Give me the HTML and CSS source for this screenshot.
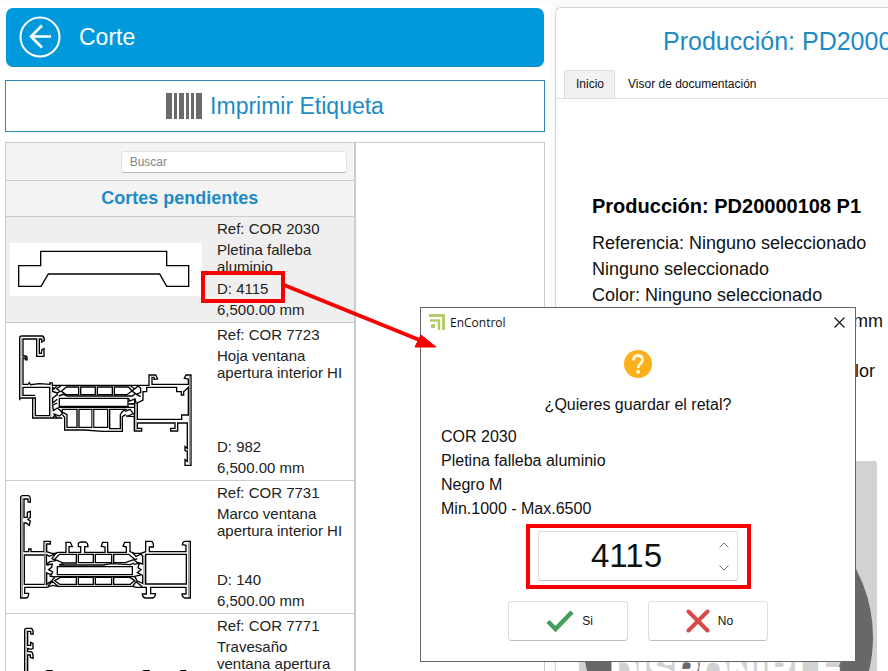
FILE: index.html
```html
<!DOCTYPE html>
<html lang="es">
<head>
<meta charset="utf-8">
<title>EnControl</title>
<link rel="stylesheet" href="styles.css">
</head>
<body>
<div class="app">
  <main class="left">
    <header class="topbar">
      <button class="back" aria-label="Volver">
        <svg width="42" height="42" viewBox="0 0 42 42" fill="none" stroke="#fff"><circle cx="21" cy="21" r="19.5" stroke-width="2"/><path d="M32 20.500H12M23 9.500L12 20.500L23 31.500" stroke-width="2.600"/></svg>
      </button>
      <h1>Corte</h1>
    </header>
    <button class="print">
      <svg width="36" height="26" viewBox="0 0 36 26" fill="#6b6b6b"><path d="M0 0h6v26H0zM8 0h3v26H8zM13 0h5v26h-5zM20 0h3v26h-3zM25 0h3v26h-3zM30 0h6v26h-6z"/></svg>
      <span>Imprimir Etiqueta</span>
    </button>
    <div class="board">
      <section class="list">
        <div class="search"><input type="text" placeholder="Buscar" aria-label="Buscar"></div>
        <h2>Cortes pendientes</h2>
        <article class="item selected">
          <svg class="flat" viewBox="30 84 576 159"><path d="M56 152H122V109H500V152H566V214H500L479 177H145L123 214H56Z"/></svg>
          <div class="info">
            <p>Ref: COR 2030</p>
            <p class="desc">Pletina falleba aluminio</p>
            <p class="marked">D: 4115</p>
            <p>6,500.00 mm</p>
          </div>
        </article>
        <article class="item">
          <svg class="tall" viewBox="30 6 576 450">
            <path d="M65 222H59V42Q59 36 65 36H127Q133 38 133 49L125 54V45H118V88H124L126 77L132 74V97H110V45H69V96H77Q83 98 81 108L76 107V102H69V181H84L88 176L92 182L118 179L150 181V176L157 177V184H447V153H467L473 165L462 166V160H456V181H565V165L553 163L558 153H573V424H555V407L562 412V381L555 380V368L562 373V297H533V321H512V313H525V297H412V313H425V321H403V270"/>
            <path d="M59 229V222H106V275H149V190H69V214H106M65 222H98V282H158L164 274L172 282"/>
            <path d="M172 184L162 195L158 190V202L172 207L180 202L170 194L184 184M158 203L172 207V212L158 222V237L172 226M172 237L158 243L160 260L172 252L182 260L187 269L178 276L160 269M158 282H187"/>
            <path d="M199 189H236V212H198L184 202ZM242 189H286V212H242ZM292 189H337V212H292ZM343 189H386L396 201L381 212H343Z"/>
            <path d="M176 216L190 211L202 216H397L407 208M178 223H384V247H178ZM175 250H405"/>
            <path d="M187 256H231V310H201V272L187 264ZM237 256H276V310H237ZM281 256H323V310H281ZM329 256H377L366 264L361 272V314H329ZM187 272L194 280V318H255L307 322H367V278L377 272"/>
            <path d="M390 184L404 195L414 186L422 193V206L409 211L397 202L403 193M409 211L422 218M387 223V232L405 225L409 238L386 240M375 262L390 256L400 269L384 276M404 270V225M378 276L406 278"/>
            <path d="M440 190H530V203H544V213H551V203L565 190V273H545V286H412V237L429 228V203H440Z"/>
            <path class="soft" d="M63 42V222M152 188V278M569 156V420M408 236V318M278 258V312"/>
          </svg>
          <div class="info">
            <p>Ref: COR 7723</p>
            <p class="desc">Hoja ventana apertura interior HI</p>
            <p>D: 982</p>
            <p>6,500.00 mm</p>
          </div>
        </article>
        <article class="item">
          <svg class="mid" viewBox="30 12 576 375">
            <path d="M62 353V53Q62 47 68 47H86Q92 49 91 67L84 66V57H72V112H82V97L91 94V112L84 119L91 123L88 136L79 129H72V215H86V207H93V215H132V184H151V192H140V215L155 220H167L174 217H198V187H211L217 200H207V217H242V200H235V190Q238 186 244 186H257Q264 190 264 200H254V217H315V201L304 199L308 187H323V217H379V201L369 198L374 187H390V215L403 220H422L437 215V184H455Q462 190 460 201H448V215H558V196L547 194Q547 187 554 184H571V354H554Q546 350 546 342H558V322H452V341H466Q466 352 457 354H435Q427 352 427 342H439V322H409L397 319H174L158 316L140 322H74V340H86Q86 352 80 354H62Z"/>
            <path d="M73 225H134V313H73ZM437 223H559V312H437Z"/>
            <path d="M178 223H229V249H190L164 238ZM235 223H280V248H235ZM286 223H335V248H286ZM341 223H386L404 238L376 248H341Z"/>
            <path d="M190 251L177 255H310L332 251L390 254L402 249M172 260H397V284H172ZM166 290H405"/>
            <path d="M181 292H229V313H179L164 302ZM235 292H280V313H235ZM286 292H335V313H286ZM341 292H390L404 302L391 313H341Z"/>
            <path d="M139 224L148 229L167 220L156 236L166 242L150 245L140 253ZM140 255L157 252L155 262L146 269L158 276L154 284L140 279V313L155 302L165 291L148 288M144 318L157 304L174 319"/>
            <path d="M397 217L408 229L424 222L428 230V252L411 247L403 240L412 236M401 253L418 250L414 263L423 269L412 278L424 284L404 289L412 303L428 310V285M399 318L408 305L427 320"/>
            <path class="soft" d="M67 53V350M135 188V315M566 188V350M432 225V315"/>
          </svg>
          <div class="info">
            <p>Ref: COR 7731</p>
            <p class="desc">Marco ventana apertura interior HI</p>
            <p>D: 140</p>
            <p>6,500.00 mm</p>
          </div>
        </article>
        <article class="item">
          <svg class="mid" viewBox="30 411 576 375">
            <path d="M74 700V451Q74 445 80 445H94Q101 448 99 463L92 462V454H83V496H92V487L99 490V505L92 508L83 505V515H93Q101 518 99 535L91 532V525H83V700M136 600V576Q138 572 143 572H158M427 580Q427 572 433 572H447V600M537 580Q540 572 545 572H557V600"/>
            <path class="soft" d="M78 450V700"/>
          </svg>
          <div class="info">
            <p>Ref: COR 7771</p>
            <p class="desc">Travesaño<br>ventana apertura</p>
          </div>
        </article>
      </section>
    </div>
  </main>

  <section class="right">
    <h2 class="order">Producción: PD20000108 P1</h2>
    <nav class="tabs">
      <button class="tab active">Inicio</button>
      <button class="tab">Visor de documentación</button>
    </nav>
    <div class="detail">
      <h3>Producción: PD20000108 P1</h3>
      <p>Referencia: Ninguno seleccionado</p>
      <p>Ninguno seleccionado</p>
      <p>Color: Ninguno seleccionado</p>
      <p class="measure">mm</p>
      <p class="kind">lor</p>
    </div>
    <svg class="photo" width="298" height="298" viewBox="0 0 298 298" role="img" aria-label="Disponible">
      <rect width="298" height="298" rx="3" fill="#d2d2d2"/>
      <circle cx="149" cy="176" r="130" fill="none" stroke="#686868" stroke-width="30"/>
      <path d="M82 230L112 194L148 230Z" fill="#686868"/>
      <text x="147" y="223" text-anchor="middle">DISPONIBLE</text>
    </svg>
  </section>
</div>

<div class="dialog" role="dialog" aria-labelledby="dialog-title">
  <div class="titlebar">
    <svg width="16" height="16" viewBox="0 0 16 16" fill="none" stroke="#b5cb68"><path d="M0 1.500H14.500V16" stroke-width="3"/><path d="M1 6.500H10V16" stroke-width="2.500"/><path d="M2 12H6" stroke-width="4"/></svg>
    <span id="dialog-title">EnControl</span>
    <button class="close" aria-label="Cerrar"><svg width="11" height="11" viewBox="0 0 11 11" stroke="#111" stroke-width="1.100"><path d="M.5.5l10 10M10.500.5l-10 10"/></svg></button>
  </div>
  <div class="content">
    <svg class="ask" width="28" height="28" viewBox="0 0 28 28"><circle cx="14" cy="14" r="14" fill="#fbb01c"/><path d="M9.500 10.500Q9.500 5.500 14 5.500T18.500 10Q18.500 12 16.500 13.500T14.200 18" fill="none" stroke="#fffbe0" stroke-width="2.800"/><circle cx="14.200" cy="21.800" r="1.900" fill="#fffbe0"/></svg>
    <p class="question">¿Quieres guardar el retal?</p>
    <div class="facts">
      <p>COR 2030</p>
      <p>Pletina falleba aluminio</p>
      <p>Negro M</p>
      <p>Min.1000 - Max.6500</p>
    </div>
    <div class="highlight">
      <div class="spin">
        <input type="number" value="4115" min="1000" max="6500" aria-label="Medida del retal">
        <div class="steps">
          <button aria-label="Aumentar"><svg width="10" height="6" viewBox="0 0 10 6"><path d="M.5 5.500L5 1L9.500 5.500"/></svg></button>
          <button aria-label="Disminuir"><svg width="10" height="6" viewBox="0 0 10 6"><path d="M.5.5L5 5L9.500.5"/></svg></button>
        </div>
      </div>
    </div>
    <div class="actions">
      <button><svg width="28" height="24" viewBox="0 0 28 24" fill="none" stroke="#449d5c" stroke-width="4.500"><path d="M2 12.500L9.500 20L26 3"/></svg>Si</button>
      <button><svg width="24" height="24" viewBox="0 0 24 24" fill="none" stroke="#d9484a" stroke-width="4" stroke-linecap="round"><path d="M2.500 2.500l19 19M21.500 2.500l-19 19"/></svg>No</button>
    </div>
  </div>
</div>

<svg class="arrow" width="156" height="72" viewBox="0 0 156 72" aria-hidden="true"><path d="M2 4L140 60" stroke="#f80000" stroke-width="4"/><path d="M139 54L154 66L133 66Z" fill="#f80000" stroke="#f80000"/></svg>
</body>
</html>
```
FILE: styles.css
```css
*,
*::before,
*::after {
  box-sizing: border-box;
}

body {
  margin: 0;
  font-family: "Liberation Sans", Arial, sans-serif;
  color: #222;
  background: #fafafa;
  overflow: hidden;
}

h1, h2, h3, p {
  margin: 0;
  font-weight: normal;
}

button {
  font: inherit;
  color: inherit;
  padding: 0;
  border: 0;
  background: none;
}

svg {
  display: block;
  flex: none;
}

.app {
  display: grid;
  grid-template-columns: 5fr 3fr;
  height: 100vh;
}

.left {
  display: flex;
  flex-direction: column;
  min-height: 0;
  margin-top: 3px;
  margin-right: 4px;
  padding: 5px 6px 0 5px;
  background: #fff;
}

.topbar {
  display: flex;
  align-items: center;
  gap: 18px;
  flex: none;
  height: 59px;
  margin: 0 1px 13px;
  padding-left: 13px;
  border-radius: 7px;
  background: #0099dc;
  border-bottom: 1px solid #1687c0;
  color: #fff;
}

.topbar h1 {
  font-size: 23px;
  line-height: 28px;
}

.print {
  display: flex;
  align-items: center;
  justify-content: center;
  gap: 8px;
  flex: none;
  height: 52px;
  margin-bottom: 10px;
  border: 1px solid #2a86b4;
  background: #fff;
  color: #1d8bc4;
  font-size: 23px;
}

.board {
  flex: 1;
  min-height: 0;
  border: 1px solid #ccc;
  border-bottom: 0;
  overflow: hidden;
}

.list {
  width: 65%;
  border-right: 2px solid #ccc;
}

.search {
  display: flex;
  justify-content: flex-end;
  padding: 8px 7px 7px;
  background: #f3f3f3;
  border-bottom: 1px solid #ccc;
}

.search input {
  width: 226px;
  height: 22px;
  padding: 0 8px;
  border: 1px solid #e4e4e4;
  border-bottom-color: #bbb;
  border-radius: 3px;
  background: #fff;
  font: 12px "Liberation Sans", Arial, sans-serif;
}

.search input::placeholder {
  color: #858585;
}

.list h2 {
  padding: 7px 0;
  border-bottom: 1px solid #ccc;
  background: #f3f3f3;
  color: #1d8bc4;
  font-size: 18px;
  line-height: 21px;
  font-weight: bold;
  text-align: center;
}

.item {
  display: flex;
  gap: 15px;
  padding: 3px 4px 4px;
  border-bottom: 1px solid #ccc;
}

.item.selected {
  background: #efefef;
}

.item > svg {
  width: 192px;
  align-self: center;
  background: #fff;
  fill: none;
  stroke: #000;
  stroke-width: 4;
}

.item .soft {
  stroke: #999;
}

.flat {
  height: 53px;
}

.tall {
  height: 150px;
}

.mid {
  height: 125px;
}

.info {
  display: flex;
  flex-direction: column;
  gap: 4px;
  flex: 1;
  font-size: 15px;
  line-height: 17px;
}

.desc {
  flex: 1;
  padding-bottom: 1px;
}

.marked {
  position: relative;
}

.marked::after {
  content: "";
  position: absolute;
  left: -16px;
  top: -9px;
  width: 84px;
  height: 32px;
  border: 4px solid #f80000;
}

.right {
  min-width: 0;
  margin-top: 7px;
  border: 1px solid #d4d4d4;
  border-width: 1px 0 0 1px;
  border-radius: 6px 0 0 0;
  background: #fff;
  overflow: hidden;
}

.order {
  padding: 19px 0 14px 107px;
  color: #1d8bc4;
  font-size: 25px;
  line-height: 29px;
  white-space: nowrap;
}

.tabs {
  display: flex;
  padding-left: 8px;
  border-bottom: 1px solid #ddd;
}

.tab {
  height: 28px;
  padding: 0 12px 2px;
  border: 1px solid transparent;
  border-bottom: 0;
  color: #111;
  font-size: 12px;
}

.tab.active {
  padding: 0 10px 2px 11px;
  border-color: #ddd;
  border-radius: 3px 3px 0 0;
  background: #f1f1f1;
}

.detail {
  width: 327px;
  padding: 94px 0 0 36px;
  color: #111;
  font-size: 18px;
  line-height: 26px;
  white-space: nowrap;
}

.detail h3 {
  margin-bottom: 11px;
  color: #000;
  font-size: 20px;
  font-weight: bold;
}

.measure {
  text-align: right;
}

.kind {
  padding: 24px 8px 0 0;
  text-align: right;
}

.photo {
  margin: 77px 0 0 23px;
}

.photo text {
  fill: #fff;
  stroke: #fff;
  stroke-width: 2;
  font: bold 38px "Liberation Sans", Arial, sans-serif;
}

.dialog {
  position: absolute;
  left: 420px;
  top: 307px;
  width: 436px;
  padding-bottom: 20px;
  border: 1px solid #666;
  background: #fff;
  color: #111;
}

.titlebar {
  display: flex;
  align-items: center;
  gap: 5px;
  height: 28px;
  padding: 0 10px 0 8px;
  font: 12px "Open Sans", "Noto Sans", sans-serif;
}

.close {
  margin-left: auto;
}

.content {
  display: flex;
  flex-direction: column;
  align-items: center;
  padding: 14px 20px 0;
  font-size: 16px;
  line-height: 24px;
}

.question {
  margin: 15px 0 8px;
}

.facts {
  align-self: stretch;
}

.highlight {
  margin: 3px 0 12px;
  padding: 3px 9px 4px 8px;
  border: 4px solid #f80000;
}

.spin {
  display: flex;
  align-items: center;
  width: 200px;
  height: 50px;
  border: 1px solid #ddd;
  border-bottom-color: #bbb;
  border-radius: 3px;
}

.spin input {
  flex: 1;
  min-width: 0;
  padding: 0 4px 0 0;
  border: 0;
  background: none;
  color: #111;
  font: 33px "Liberation Sans", Arial, sans-serif;
  text-align: center;
  appearance: textfield;
}

.spin input::-webkit-inner-spin-button {
  appearance: none;
  margin: 0;
}

.steps {
  display: flex;
  flex-direction: column;
  gap: 17px;
  padding-right: 8px;
}

.steps svg {
  fill: none;
  stroke: #777;
}

.actions {
  display: flex;
  gap: 20px;
}

.actions button {
  display: flex;
  align-items: center;
  justify-content: center;
  gap: 8px;
  width: 120px;
  height: 40px;
  padding-left: 3px;
  border: 1px solid #ddd;
  border-bottom-color: #bbb;
  border-radius: 4px;
  font-size: 12px;
}

.arrow {
  position: absolute;
  left: 282px;
  top: 281px;
  fill: none;
}
```
